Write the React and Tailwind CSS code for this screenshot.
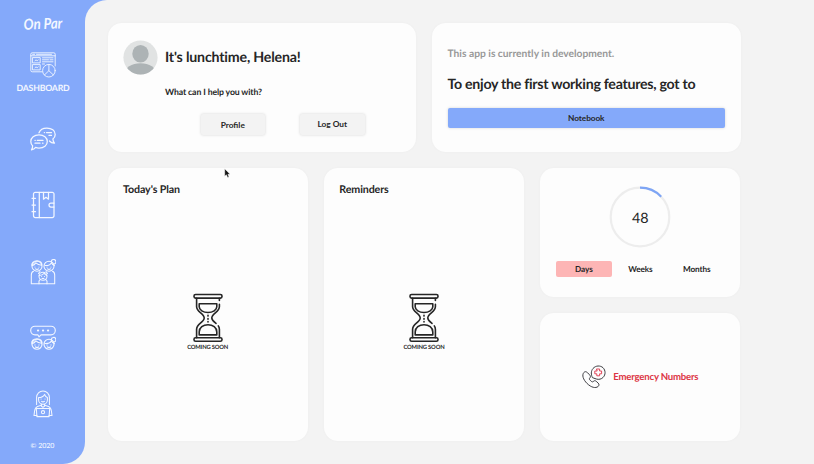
import React from "react";

const line = {
  fill: "none",
  stroke: "currentColor",
  strokeLinecap: "round",
  strokeLinejoin: "round",
};

function DashboardIcon() {
  return (
    <svg width="26" height="26" viewBox="0 0 26 26" strokeWidth="0.9" {...line}>
      <path d="M12 19.8H2.2A1.4 1.4 0 0 1 .8 18.400V2.200A1.400 1.400 0 0 1 2.200.8h21.600A1.400 1.400 0 0 1 25.200 2.200V14" />
      <path d="M.8 3.800h24.400M2.600 2.300h2M6.500 2.300h15" />
      <rect x="2.800" y="5.600" width="7.400" height="5.300" />
      <rect x="2.800" y="12.600" width="7.400" height="5.300" />
      <path d="M5 8.700l1-.8 1.200.8 1-.8M5 15.700l1-.8 1.200.8 1-.8M12.500 5.800h10.500M12.500 7.800h6M20 7.800h3M12.500 9.800h10.500M12.500 12h2" />
      <circle cx="18.900" cy="18.700" r="6.300" />
      <path d="M18.900 12.600v6.100l-4.400 4.200M18.900 18.700l4.400 4.200" />
    </svg>
  );
}

function ChatIcon() {
  return (
    <svg width="26" height="26" viewBox="0 0 26 26" strokeWidth="1.250" {...line}>
      <path d="M9 6.800C10 3.800 13 2.100 16.900 2.100c4.800 0 8.300 2.600 8.300 6.300 0 2-.9 3.600-2.300 4.700.1 1.600.6 2.900 1.600 4-2 .1-3.800-.7-5-2.100" />
      <path d="M9 8.900c4.900 0 8.300 2.800 8.300 6.600S13.900 22 9 22c-1.300 0-2.400-.2-3.400-.6-1 1.400-2.300 2.200-4.100 2.500.8-1.300 1.200-2.700 1.100-4.100C1.400 18.600.8 17.200.8 15.500.8 11.700 4.200 8.900 9 8.900z" />
      <path d="M14.300 6.600h.2M16.500 6.600h5M19 9.400h2.500M5 14.400h.2M7.300 14.400h5.700M5 17.200h5M12.500 17.200h.5" />
    </svg>
  );
}

function NotebookIcon() {
  return (
    <svg width="26" height="28" viewBox="0 0 26 28" strokeWidth="1.250" {...line}>
      <path d="M24 12V3.100A1.700 1.700 0 0 0 22.300 1.400H5.200A1.700 1.700 0 0 0 3.500 3.100v21.700a1.700 1.700 0 0 0 1.700 1.700h17.100a1.700 1.700 0 0 0 1.700-1.700V16" />
      <path d="M9.300 1.400v25.100M13.500 1.400v6.800l2.500-1.900 2.500 1.900V1.400M24 12h-3a2 2 0 0 0 0 4h3zM2 7.300h3.500M2 14h3.500M2 20.700h3.500" />
    </svg>
  );
}

function Face({ x = 0, y = 0, bun = false }) {
  return (
    <g transform={`translate(${x} ${y})`}>
      <circle cx="6" cy="6" r="5" />
      {bun ? (
        <path d="M2 5.300C5 5.500 7.500 4.500 8.500 2.500 9 4.300 10 5 11.500 5.300M8.300 1.700A2.300 2.300 0 1 1 11 3.800" />
      ) : (
        <path d="M1 5.500C0 3 2.500.5 6 .5s5.300 2.300 4.800 4.500C8 5 6 4 4.800 2.700 4 4 2.800 5 1 5.500" />
      )}
      <path d="M4 6.700v.2M8 6.700v.2M4.500 8.700q1.500 1 3 0" />
    </g>
  );
}

function FamilyIcon() {
  return (
    <svg width="26" height="26" viewBox="0 0 26 26" strokeWidth="1.050" {...line}>
      <Face x={1} y={1.2} />
      <Face x={13} y={1.2} bun />
      <path d="M3.500 12.300C1.500 13 1.300 14 1.300 16v8.700h23.400V16c0-2-.2-3-2.200-3.700M10 12.600l-1.500 1.900M16 12.600l1.500 1.900" />
      <circle cx="13" cy="17.200" r="4" />
      <path d="M9.200 16.400c2.500 0 4-.8 5-2.100.7 1.300 1.500 1.900 2.600 2.100M11.600 17.500h.1M14.400 17.500h.1M12 19.200q1 .6 2 0M9 24.700v-2.500q.2-1.200 1.700-1.600M17 24.700v-2.500q-.2-1.200-1.700-1.600" />
    </svg>
  );
}

function TalkIcon() {
  return (
    <svg width="26" height="26" viewBox="0 0 26 26" strokeWidth="1.150" {...line}>
      <path d="M5 1.200h16a4.300 4.300 0 0 1 0 8.600H11L9 11.800 7.800 9.800H5a4.300 4.300 0 0 1 0-8.600z" />
      <path d="M8 5.500h.1M13 5.500h.1M18 5.500h.1" strokeWidth="2.200" />
      <Face x={1} y={13.2} />
      <Face x={13} y={13.2} bun />
    </svg>
  );
}

function WorkIcon() {
  return (
    <svg width="20" height="28" viewBox="0 0 20 28" strokeWidth="1.050" {...line}>
      <path d="M3.600 14.500V7.300A6.400 6.400 0 0 1 16.400 7.300v7.200" />
      <path d="M5.600 7.500v2.300a4.400 4.400 0 0 0 8.800 0V7.500M5.600 7.500c3.200 0 5-1.200 6-3.100.5 1.800 1.300 2.600 2.800 3.100M8 9h.1M12 9h.1M8.600 11.400q1.400.9 2.800 0M8.300 14v2l1.700 1.300 1.700-1.300v-2" />
      <path d="M8.300 15.300l-3.800 1.200C2.500 17.200 2 18.700 1.600 21L1 25.500h3M11.700 15.300l3.800 1.200c2 .7 2.500 2.200 2.900 4.500l.6 4.500h-3" />
      <path d="M3.300 18.400h13.400l-.6 8.200H3.900z" />
      <circle cx="10" cy="22.200" r="1.600" />
    </svg>
  );
}

function Hourglass() {
  return (
    <svg width="32" height="50" viewBox="0 0 32 50" strokeWidth="1.600" {...line}>
      <rect x="2" y="1.500" width="28" height="3.600" rx="1.600" />
      <rect x="2" y="44.700" width="28" height="3.600" rx="1.600" />
      <path d="M4.600 5.200v8.500c0 5 7.600 7 7.600 11.200S4.600 31 4.600 36.200v8.500M27.400 44.700v-8.500c0-1.200-.4-2.300-1.100-3.300M24 30.400c-2.300-2-4.200-3.300-4.200-5.500 0-4.200 7.600-6.200 7.600-11.200v-2.500M27.400 7.500V5.200" />
      <path d="M7.200 10.700h17.600v3c0 3.300-4 5.800-8.800 5.800s-8.800-2.500-8.800-5.800zM7.200 41.900V39c0-4.500 4-7.300 8.800-7.300s8.800 2.800 8.800 7.300v2.900z" />
      <path d="M16 22.300v.8M16 25.500v.8M16 28.500v.5" />
    </svg>
  );
}

function EmergencyIcon() {
  return (
    <svg className="text-[#3d3d42]" width="24" height="24" viewBox="0 0 24 24" strokeWidth="1" {...line}>
      <path d="M5.300 7.500C3.800 6.200 2.900 6.500 1.800 7.600c-2 2.500-.8 6.800 3.300 10.900 4.200 4.100 8.500 5 11 3 1-1.100 1.300-2 .1-3.400l-2-1.800c-1-.9-2-.8-3 .3-.8.6-1.500.2-2.600-.9-1.200-1.100-1.600-1.800-.9-2.600 1-1 1-2 .1-3z" />
      <path d="M10.300 12.300c-1.300-2.700-1.500-6.200.7-8.800C13.800.3 18.300.3 21 2.700c2.700 2.700 2.700 7 .2 9.600-1.800 1.900-4.300 2.500-6.600 1.800z" />
      <path className="text-[#e0475a]" stroke="currentColor" d="M14.800 4h2.800v2h2v2.800h-2v2h-2.800v-2h-2V6h2z" />
    </svg>
  );
}

function Avatar() {
  return (
    <svg width="35" height="35" viewBox="0 0 35 35">
      <defs>
        <clipPath id="avatar">
          <circle cx="17.500" cy="17.500" r="17.100" />
        </clipPath>
      </defs>
      <g clipPath="url(#avatar)">
        <rect width="35" height="35" fill="#e1e3e3" />
        <ellipse cx="17.500" cy="13.700" rx="8.200" ry="8.800" fill="#adb3b5" />
        <ellipse cx="17.500" cy="34" rx="16" ry="10.800" fill="#adb3b5" />
      </g>
    </svg>
  );
}

const card = "rounded-[14px] bg-[#fdfdfd] shadow-[0_0_3px_rgba(0,0,0,0.03)]";

function ComingSoon({ title }) {
  return (
    <section className={`${card} row-span-2 flex flex-col px-[15.500px] pt-[15.500px]`}>
      <h2 className="text-[10.700px] leading-[14px] font-bold tracking-[-0.120px]">{title}</h2>
      <div className="mt-[96px] flex flex-col items-center">
        <Hourglass />
        <p className="mt-px text-[5.800px] leading-[8px] font-bold tracking-[-0.160px]">COMING SOON</p>
      </div>
    </section>
  );
}

function Sidebar() {
  return (
    <nav className="flex w-[85px] shrink-0 flex-col items-center rounded-br-[22px] bg-[#84a9fa] pt-[14px] text-[#f3f7ff]">
      <div className="h-[18px] -rotate-2 text-[15px] leading-[20px] font-bold italic">
        <span className="inline-block origin-center scale-x-[0.88] whitespace-nowrap">On Par</span>
      </div>
      <a className="mt-[20px] ml-px flex flex-col items-center">
        <DashboardIcon />
        <span className="mt-[3.500px] text-[8.700px] leading-[12px] font-bold tracking-[-0.200px]">DASHBOARD</span>
      </a>
      <a className="mt-[32px]"><ChatIcon /></a>
      <a className="mt-[39.500px]"><NotebookIcon /></a>
      <a className="mt-[39.500px]"><FamilyIcon /></a>
      <a className="mt-[40px]"><TalkIcon /></a>
      <a className="mt-[39.500px]"><WorkIcon /></a>
      <p className="mt-[23px] text-[7px] leading-[10px] font-medium">© 2020</p>
    </nav>
  );
}

export default function App() {
  return (
    <div className="flex h-[464px] w-[814px] overflow-hidden bg-[linear-gradient(to_bottom,#84a9fa_50%,#f3f3f3_50%)] font-['Lato',sans-serif] text-[#262626] [text-rendering:geometricPrecision] [&_svg]:block">
      <Sidebar />
      <main className="flex-1 rounded-tl-[22px] bg-[#f3f3f3] pt-[23px] pl-[22.500px]">
        <div className="grid w-[633px] grid-cols-2 gap-4">
          <section className={`${card} h-[128.500px] px-[15.500px] pt-[16.500px]`}>
            <div className="flex items-center gap-[7px]">
              <Avatar />
              <h1 className="pt-px text-[14.200px] leading-[20px] font-bold tracking-[-0.180px]">It's lunchtime, Helena!</h1>
            </div>
            <p className="mt-[11px] ml-[42px] text-[8.700px] leading-[12px] font-bold tracking-[-0.120px]">What can I help you with?</p>
            <div className="mt-[16.500px] ml-[77.500px] flex gap-[35px]">
              <button className="h-[21px] w-[64.500px] rounded-[2px] bg-[#f3f3f3] text-[8.300px] leading-[12px] font-bold shadow-[0_0_3px_rgba(0,0,0,0.16)]">Profile</button>
              <button className="h-[21px] w-[64.500px] rounded-[2px] bg-[#f3f3f3] pb-px text-[8.300px] leading-[12px] font-bold shadow-[0_0_3px_rgba(0,0,0,0.16)]">Log Out</button>
            </div>
          </section>
          <section className={`${card} h-[128.500px] px-[15.500px] pt-[24px]`}>
            <p className="text-[10.250px] leading-[14px] font-bold text-[#989898]">This app is currently in development.</p>
            <h1 className="mt-[13.500px] text-[14.200px] leading-[20px] font-bold tracking-[-0.280px] whitespace-nowrap">To enjoy the first working features, got to</h1>
            <button className="mt-[13.500px] block h-[20px] w-full rounded-[2px] bg-[#84a9fa] text-[8.300px] leading-[12px] font-bold tracking-[-0.100px] shadow-[0_0_3px_rgba(0,0,0,0.16)]">Notebook</button>
          </section>
        </div>
        <div className="mt-4 grid w-[633px] grid-cols-3 grid-rows-[129px_128.500px] gap-4">
          <ComingSoon title="Today's Plan" />
          <ComingSoon title="Reminders" />
          <section className={`${card} flex flex-col items-center px-[15.500px] pt-[18.500px]`}>
            <div className="grid size-[62px] place-items-center">
              <svg className="col-start-1 row-start-1" width="62" height="62" viewBox="0 0 62 62" fill="none" strokeWidth="2.200">
                <circle cx="31" cy="31" r="29.300" stroke="#ededed" />
                <path d="M31 1.700A29.300 29.300 0 0 1 52.200 10.700" stroke="#7ea5f5" />
              </svg>
              <span className="col-start-1 row-start-1 pt-[3px] text-[14.300px] leading-[20px]">48</span>
            </div>
            <div className="mt-[13px] grid w-full grid-cols-3 text-center text-[8.200px] leading-[16px] font-bold tracking-[-0.100px]">
              <span className="rounded-[2px] bg-[#fdb5b5]">Days</span>
              <span>Weeks</span>
              <span>Months</span>
            </div>
          </section>
          <section className={`${card} flex items-center justify-center gap-[7px]`}>
            <EmergencyIcon />
            <span className="pt-[2.500px] text-[9.600px] leading-[14px] font-bold tracking-[-0.200px] text-[#dc3545]">Emergency Numbers</span>
          </section>
        </div>
      </main>
      <svg className="pointer-events-none absolute top-[168px] left-[224px]" width="7" height="11" viewBox="0 0 7 11">
        <path d="M.7.7v7.600l1.700-1.500 1.200 2.700 1.400-.6-1.100-2.600h2.200z" fill="#151515" stroke="#fff" strokeWidth=".5" />
      </svg>
    </div>
  );
}
